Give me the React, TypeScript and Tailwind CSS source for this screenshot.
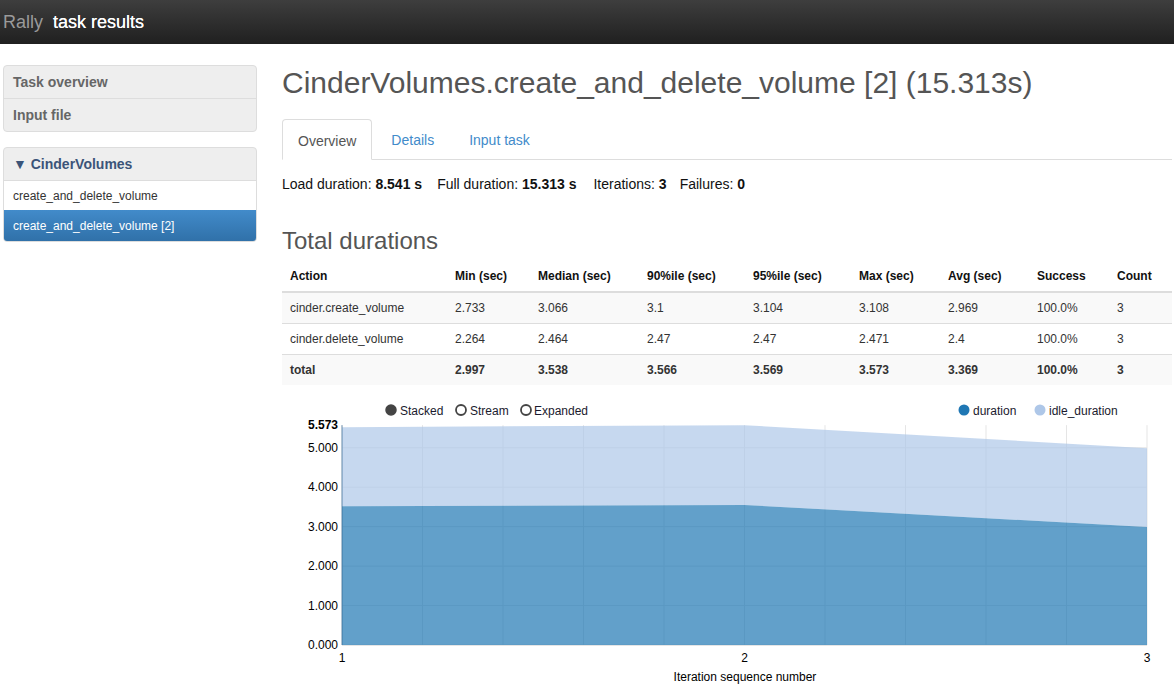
import React from 'react';

const FONT = { fontFamily: '"Liberation Sans", Arial, Helvetica, sans-serif' };

const COLS = [
  { label: 'Action', w: 'w-[165px]' },
  { label: 'Min (sec)', w: 'w-[83px]' },
  { label: 'Median (sec)', w: 'w-[109px]' },
  { label: '90%ile (sec)', w: 'w-[106px]' },
  { label: '95%ile (sec)', w: 'w-[106px]' },
  { label: 'Max (sec)', w: 'w-[89px]' },
  { label: 'Avg (sec)', w: 'w-[89px]' },
  { label: 'Success', w: 'w-[80px]' },
  { label: 'Count', w: 'w-[63px]' },
];

const ROWS = [
  ['cinder.create_volume', '2.733', '3.066', '3.1', '3.104', '3.108', '2.969', '100.0%', '3'],
  ['cinder.delete_volume', '2.264', '2.464', '2.47', '2.47', '2.471', '2.4', '100.0%', '3'],
  ['total', '2.997', '3.538', '3.566', '3.569', '3.573', '3.369', '100.0%', '3'],
];

// chart geometry, svg coords (page x - 282, page y - 395)
const X0 = 60;
const X1 = 865;
const Y0 = 249;
const K = 39.45;
const xs = [X0, (X0 + X1) / 2, X1];
const duration = [3.52, 3.55, 2.99];
const total = [5.52, 5.573, 4.99];
const yv = (v: number) => Y0 - v * K;

function areaPath(top: number[], bottom: number[]) {
  const up = top.map((v, i) => `${i === 0 ? 'M' : 'L'}${xs[i]},${yv(v)}`).join(' ');
  const down = bottom
    .map((v, i) => ({ v, i }))
    .reverse()
    .map(({ v, i }) => `L${xs[i]},${yv(v)}`)
    .join(' ');
  return `${up} ${down} Z`;
}

function Chart() {
  const ticks = [0, 1, 2, 3, 4, 5];
  const vgrid = Array.from({ length: 11 }, (_, i) => X0 + ((X1 - X0) / 10) * i);
  return (
    <svg width="890" height="296" className="block" style={FONT}>
      {/* legend: controls */}
      <g fontSize="12" fill="#1a1a2e">
        <circle cx="109" cy="14" r="5" fill="#444" stroke="#444" strokeWidth="1.5" />
        <text x="118" y="18.5">Stacked</text>
        <circle cx="179" cy="14" r="5" fill="#fff" stroke="#444" strokeWidth="1.8" />
        <text x="188" y="18.5">Stream</text>
        <circle cx="244" cy="14" r="5" fill="#fff" stroke="#444" strokeWidth="1.8" />
        <text x="252" y="18.5">Expanded</text>
        <circle cx="682" cy="14" r="5.5" fill="#1f77b4" />
        <text x="691" y="18.5">duration</text>
        <circle cx="758" cy="14" r="5.5" fill="#aec7e8" />
        <text x="767" y="18.5">idle_duration</text>
      </g>

      {/* grid */}
      {ticks.map((t) => (
        <line key={t} x1={X0} x2={X1} y1={yv(t)} y2={yv(t)} stroke="#e5e5e5" />
      ))}
      {vgrid.map((x) => (
        <line key={x} x1={x} x2={x} y1={yv(5.573)} y2={Y0} stroke="#e5e5e5" />
      ))}

      {/* areas */}
      <path d={areaPath(total, duration)} fill="#aec7e8" fillOpacity="0.7" />
      <path d={areaPath(duration, [0, 0, 0])} fill="#1f77b4" fillOpacity="0.7" />

      {/* axes */}
      <line x1={X0} x2={X0} y1={yv(5.573)} y2={Y0} stroke="#3b6c98" strokeOpacity="0.7" />
      <line x1={X0} x2={X1} y1={Y0 + 0.5} y2={Y0 + 0.5} stroke="#e5e5e5" />

      <g fontSize="12" fill="#000" textAnchor="end">
        {ticks.map((t) => (
          <text key={t} x={X0 - 4} y={yv(t) + 4}>
            {t.toFixed(3)}
          </text>
        ))}
        <text x={X0 - 4} y={yv(5.573) + 4} fontWeight="bold">
          5.573
        </text>
      </g>
      <g fontSize="12" fill="#000" textAnchor="middle">
        <text x={X0} y={Y0 + 17}>1</text>
        <text x={(X0 + X1) / 2} y={Y0 + 17}>2</text>
        <text x={X1} y={Y0 + 17}>3</text>
        <text x={463} y={Y0 + 36}>Iteration sequence number</text>
      </g>
    </svg>
  );
}

export default function App() {
  return (
    <div className="min-h-[691px] bg-white text-[#333]" style={FONT}>
      <div className="flex h-[44px] items-center bg-gradient-to-b from-[#3e3e3e] to-[#202020] pl-[3px]">
        <span className="text-[18px] text-[#9a9a9a]">Rally</span>
        <span className="ml-[10px] text-[18px] text-white [text-shadow:0_0_0.6px_#fff]">task results</span>
      </div>

      <div className="flex">
        <div className="ml-[3px] mt-[21px] w-[254px] shrink-0">
          <div className="overflow-hidden rounded border border-[#ddd] bg-[#eee]">
            <div className="flex h-[32px] items-center pl-[9px] text-[14px] font-bold text-[#666]">Task overview</div>
            <div className="flex h-[33px] items-center border-t border-[#ddd] pl-[9px] text-[14px] font-bold text-[#666]">
              Input file
            </div>
          </div>

          <div className="mt-[15px] overflow-hidden rounded border border-[#ddd] bg-[#eee]">
            <div className="flex h-[32px] items-center pl-[9px] text-[14px] font-bold text-[#3b5479]">▼ CinderVolumes</div>
            <div className="flex h-[30px] items-center border-t border-[#ddd] bg-white pl-[9px] text-[12px] text-[#333]">
              create_and_delete_volume
            </div>
            <div className="flex h-[31px] items-center bg-gradient-to-b from-[#428bca] to-[#3071a9] pl-[9px] text-[12px] text-white">
              create_and_delete_volume [2]
            </div>
          </div>
        </div>

        <div className="ml-[25px] w-[890px]">
          <h1 className="mt-[22px] text-[30px] leading-[33px] text-[#555]">
            CinderVolumes.create_and_delete_volume [2] (15.313s)
          </h1>

          <div className="mt-[20px] flex h-[41px] border-b border-[#ddd] text-[14px]">
            <div className="-mb-px mr-[2px] h-[41px] rounded-t border border-b-white border-[#ddd] bg-white px-[15px] pb-[9px] pt-[11px] leading-[20px] text-[#555]">
              Overview
            </div>
            <div className="mr-[2px] px-[17px] pb-[9px] pt-[11px] leading-[20px] text-[#428bca]">Details</div>
            <div className="px-[16px] pb-[9px] pt-[11px] leading-[20px] text-[#428bca]">Input task</div>
          </div>

          <p className="mt-[14px] text-[14px] leading-[20px] text-[#111]">
            Load duration: <b>8.541 s</b>
            <span className="ml-[15px]">Full duration: </span>
            <b>15.313 s</b>
            <span className="ml-[17px]">Iterations: </span>
            <b>3</b>
            <span className="ml-[13px]">Failures: </span>
            <b>0</b>
          </p>

          <h2 className="mt-[34px] text-[24px] leading-[26px] text-[#555]">Total durations</h2>

          <table className="mt-[7px] w-[890px] table-fixed border-collapse text-[12px] text-[#333]">
            <thead>
              <tr className="h-[31px] border-b-2 border-[#ddd]">
                {COLS.map((c) => (
                  <th key={c.label} className={`${c.w} px-2 text-left font-bold text-[#111]`}>
                    {c.label}
                  </th>
                ))}
              </tr>
            </thead>
            <tbody>
              {ROWS.map((r, i) => (
                <tr
                  key={r[0]}
                  className={`h-[31px] border-t border-[#ddd] ${i % 2 === 0 ? 'bg-[#f9f9f9]' : 'bg-white'} ${
                    i === 2 ? 'font-bold' : ''
                  }`}
                >
                  {r.map((cell, j) => (
                    <td key={j} className="px-2">
                      {cell}
                    </td>
                  ))}
                </tr>
              ))}
            </tbody>
          </table>

          <div className="mt-[11px]">
            <Chart />
          </div>
        </div>
      </div>
    </div>
  );
}
